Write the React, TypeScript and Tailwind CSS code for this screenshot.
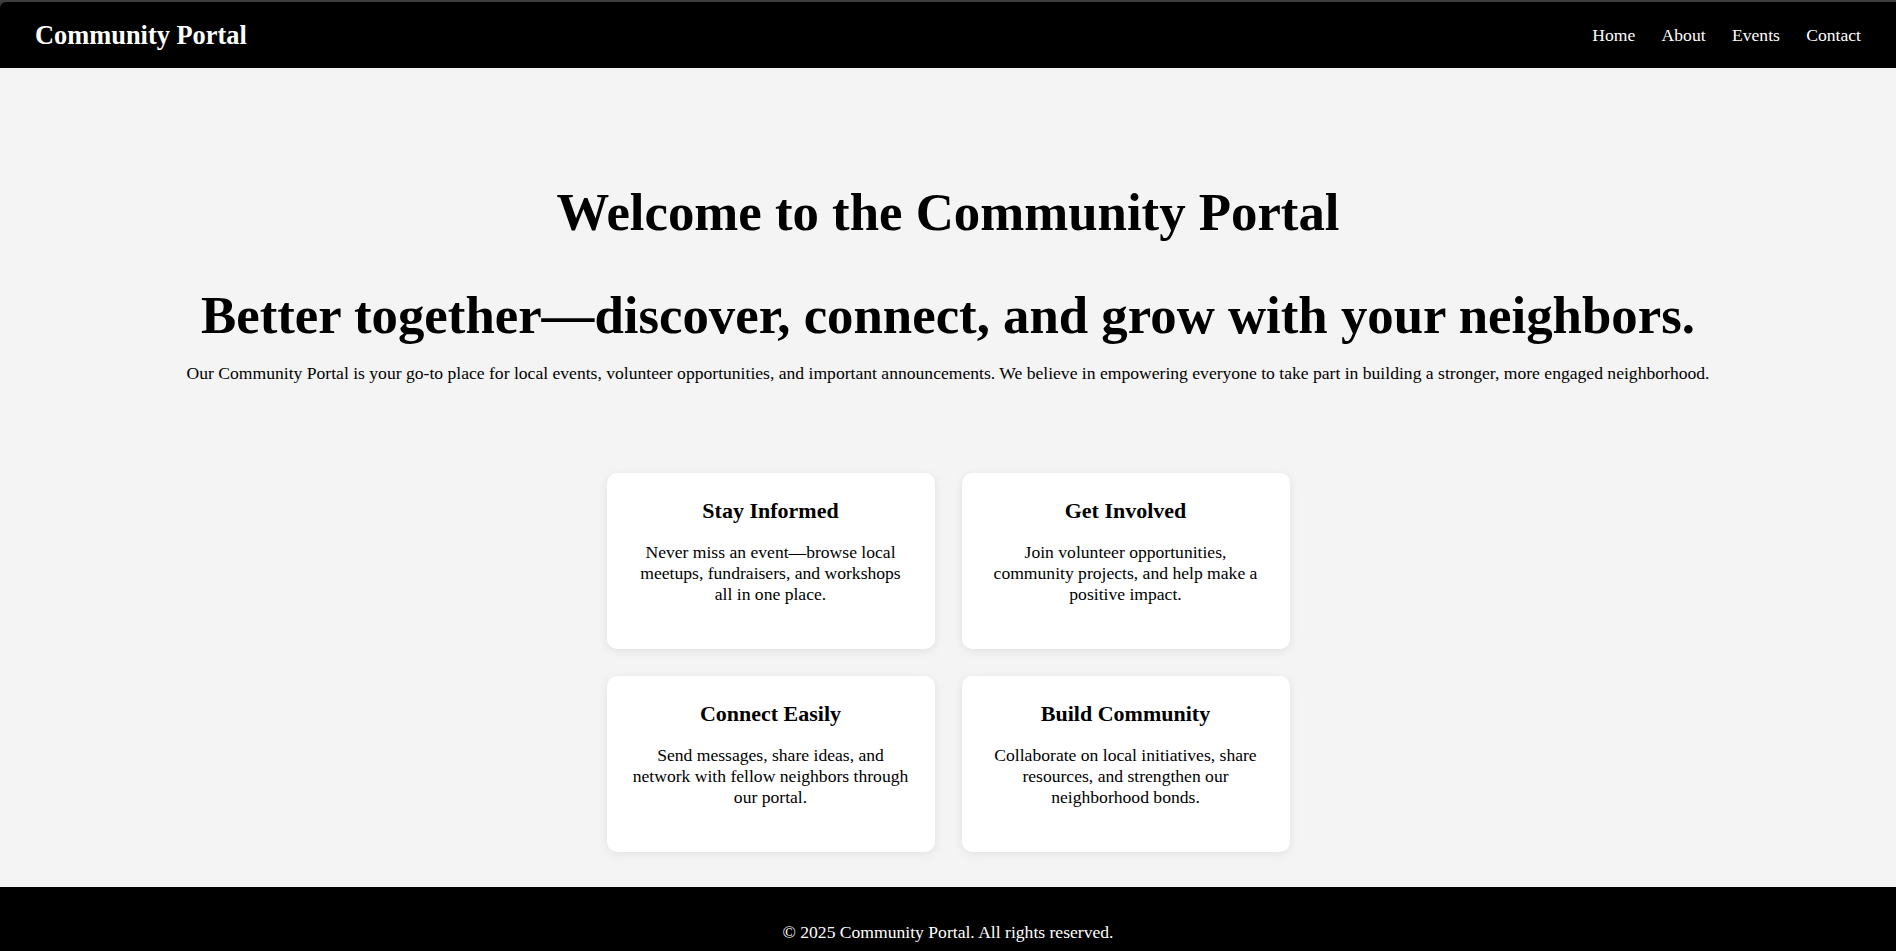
const features = [
  {
    title: "Stay Informed",
    text: "Never miss an event—browse local meetups, fundraisers, and workshops all in one place.",
  },
  {
    title: "Get Involved",
    text: "Join volunteer opportunities, community projects, and help make a positive impact.",
  },
  {
    title: "Connect Easily",
    text: "Send messages, share ideas, and network with fellow neighbors through our portal.",
  },
  {
    title: "Build Community",
    text: "Collaborate on local initiatives, share resources, and strengthen our neighborhood bonds.",
  },
];

const links = ["Home", "About", "Events", "Contact"];

export default function App() {
  return (
    <div className="min-h-screen bg-[#f4f4f4] font-['Liberation_Serif','Times_New_Roman',serif] text-black">
      <div className="bg-[#3c3c3c] pt-[2px]">
        <header className="flex h-[66px] items-center justify-between rounded-tl-[6px] bg-black px-[35px] text-white">
          <div className="text-[26.4px] font-bold leading-[1.15]">Community Portal</div>
          <nav className="flex gap-[26.4px] text-[17.6px] leading-[1.15]">
            {links.map((link) => (
              <a key={link} href="#" className="text-white">
                {link}
              </a>
            ))}
          </nav>
        </header>
      </div>

      <section className="px-8 pt-[114px] text-center">
        <h1 className="text-[52.8px] font-bold leading-[1.15]">Welcome to the Community Portal</h1>
        <h2 className="mt-[42.6px] text-[52.8px] font-bold leading-[1.15]">
          Better together—discover, connect, and grow with your neighbors.
        </h2>
        <p className="mt-[16.5px] text-[17.6px] leading-[1.15]">
          Our Community Portal is your go-to place for local events, volunteer opportunities, and important
          announcements. We believe in empowering everyone to take part in building a stronger, more engaged
          neighborhood.
        </p>
      </section>

      <section className="mt-[90px] flex justify-center pb-[35px]">
        <div className="grid grid-cols-[328px_328px] gap-[27px]">
          {features.map((f) => (
            <div
              key={f.title}
              className="h-[176px] rounded-[10px] bg-white px-6 pt-[25px] text-center shadow-[0_2px_10px_rgba(0,0,0,0.08)]"
            >
              <h3 className="text-[22px] font-bold leading-[1.15]">{f.title}</h3>
              <p className="mt-[18.5px] text-[17.6px] leading-[21px]">{f.text}</p>
            </div>
          ))}
        </div>
      </section>

      <footer className="bg-black py-[35px] text-center text-[17.6px] leading-[1.15] text-white">
        © 2025 Community Portal. All rights reserved.
      </footer>
    </div>
  );
}
